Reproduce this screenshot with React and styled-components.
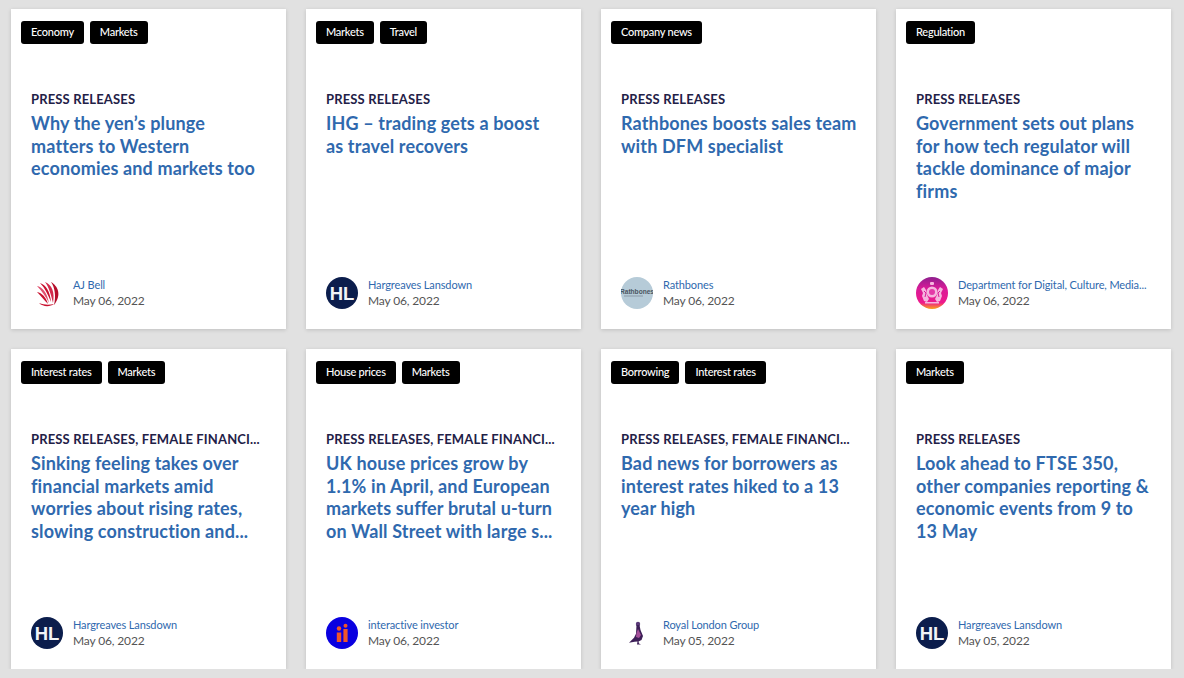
import styled, { createGlobalStyle } from "styled-components";

const GlobalStyle = createGlobalStyle`
  html, body {
    margin: 0;
    padding: 0;
    background: #e1e1e1;
  }
  body {
    font-family: "Lato", "Liberation Sans", sans-serif;
  }
`;

function AjBellLogo() {
  return (
    <svg width="32" height="32" viewBox="0 0 32 32">
      <path d="M20 5C27 9 31 18 23 28C25 19 24 11 20 5z" fill="#b50d2a" />
      <path d="M14 5C21 8 24 15 22 26C20 18 18 10 14 5z" fill="#d42a4c" />
      <path d="M9 6C15 8 19 14 20 25C17 18 14 11 9 6z" fill="#c8102e" />
      <path d="M6 9C11 10 16 15 18 26C15 20 11 14 6 9z" fill="#e0506e" />
      <path d="M6 15C11 16 15 20 17 27C13 23 10 19 6 15z" fill="#c8102e" />
      <path d="M8 26C12 30 19 30 23 27C18 28 13 28 8 26z" fill="#c8102e" />
    </svg>
  );
}

function HlLogo() {
  return (
    <svg width="32" height="32" viewBox="0 0 32 32">
      <circle cx="16" cy="16" r="16" fill="#0b1d4c" />
      <text x="16" y="22.5" textAnchor="middle" fontSize="18.5" fontWeight="700" fontFamily="Liberation Sans" fill="#f2f4f8">HL</text>
    </svg>
  );
}

function RathbonesLogo() {
  return (
    <svg width="32" height="32" viewBox="0 0 32 32">
      <circle cx="16" cy="16" r="16" fill="#b6cbd8" />
      <text x="16" y="16.5" textAnchor="middle" fontSize="6.6" fontWeight="700" fontFamily="Liberation Sans" fill="#4a5560">Rathbones</text>
      <rect x="3" y="18.5" width="19" height="1" fill="#8a9aa6" />
    </svg>
  );
}

function CrestLogo() {
  return (
    <svg width="32" height="32" viewBox="0 0 32 32">
      <defs>
        <linearGradient id="crest" x1="0" y1="0" x2="0" y2="1">
          <stop offset="0" stopColor="#8e1f8e" />
          <stop offset="0.35" stopColor="#d81b98" />
          <stop offset="0.8" stopColor="#ee1a8c" />
          <stop offset="1" stopColor="#f9a51a" />
        </linearGradient>
      </defs>
      <circle cx="16" cy="16" r="16" fill="url(#crest)" />
      <g fill="#f5b6de">
        <rect x="14" y="5" width="4" height="3" rx="1" />
        <circle cx="16" cy="15" r="5.5" />
        <path d="M5 12l3-2 2 3 1 5 2 4-2 3-3-1-2-5 1-3zM27 12l-3-2-2 3-1 5-2 4 2 3 3-1 2-5-1-3z" />
        <rect x="9" y="25" width="14" height="1.5" />
      </g>
      <circle cx="16" cy="15" r="3" fill="#e43aa8" />
      <path d="M8 14l2 2-1 4M24 14l-2 2 1 4" fill="none" stroke="#d81b98" strokeWidth="1" />
    </svg>
  );
}

function InteractiveLogo() {
  return (
    <svg width="32" height="32" viewBox="0 0 32 32">
      <circle cx="16" cy="16" r="16" fill="#0a00e0" />
      <g fill="#f0552a">
        <circle cx="13" cy="11.5" r="2.2" />
        <rect x="10.8" y="15.5" width="4.4" height="9.5" />
        <circle cx="19.5" cy="8.7" r="2" />
        <rect x="17.4" y="12" width="4.2" height="13" />
      </g>
    </svg>
  );
}

function RoyalLondonLogo() {
  return (
    <svg width="32" height="32" viewBox="0 0 32 32">
      <circle cx="17" cy="7" r="2.2" fill="#5a3a78" />
      <path d="M15.5 8h3l1 5 2.5 6-1.5 4-3 1.5.5 2 2 1h-4l.5-3-3 .2-5.500 1 5-5 2-4z" fill="#3d1f57" />
      <path d="M17 12l3 6-2 3-3-1 .5-4z" fill="#a5509a" />
    </svg>
  );
}

const logos = {
  aj: AjBellLogo,
  hl: HlLogo,
  rathbones: RathbonesLogo,
  crest: CrestLogo,
  ii: InteractiveLogo,
  royal: RoyalLondonLogo,
};

// line breaks in the titles are kept by hand, the font here isn't the one in the design
const articles = [
  { tags: ["Economy", "Markets"], category: "PRESS RELEASES", title: "Why the yen’s plunge\nmatters to Western\neconomies and markets too", logo: "aj", source: "AJ Bell", date: "May 06, 2022" },
  { tags: ["Markets", "Travel"], category: "PRESS RELEASES", title: "IHG – trading gets a boost\nas travel recovers", logo: "hl", source: "Hargreaves Lansdown", date: "May 06, 2022" },
  { tags: ["Company news"], category: "PRESS RELEASES", title: "Rathbones boosts sales team\nwith DFM specialist", logo: "rathbones", source: "Rathbones", date: "May 06, 2022" },
  { tags: ["Regulation"], category: "PRESS RELEASES", title: "Government sets out plans\nfor how tech regulator will\ntackle dominance of major\nfirms", logo: "crest", source: "Department for Digital, Culture, Media...", date: "May 06, 2022" },
  { tags: ["Interest rates", "Markets"], category: "PRESS RELEASES, FEMALE FINANCI...", title: "Sinking feeling takes over\nfinancial markets amid\nworries about rising rates,\nslowing construction and...", logo: "hl", source: "Hargreaves Lansdown", date: "May 06, 2022" },
  { tags: ["House prices", "Markets"], category: "PRESS RELEASES, FEMALE FINANCI...", title: "UK house prices grow by\n1.1% in April, and European\nmarkets suffer brutal u-turn\non Wall Street with large s...", logo: "ii", source: "interactive investor", date: "May 06, 2022" },
  { tags: ["Borrowing", "Interest rates"], category: "PRESS RELEASES, FEMALE FINANCI...", title: "Bad news for borrowers as\ninterest rates hiked to a 13\nyear high", logo: "royal", source: "Royal London Group", date: "May 05, 2022" },
  { tags: ["Markets"], category: "PRESS RELEASES", title: "Look ahead to FTSE 350,\nother companies reporting &\neconomic events from 9 to\n13 May", logo: "hl", source: "Hargreaves Lansdown", date: "May 05, 2022" },
];

export default function App() {
  return (
    <>
      <GlobalStyle />
      <Grid>
        {articles.map((a) => {
          const Logo = logos[a.logo];
          return (
            <Card key={a.title}>
              <Tags>
                {a.tags.map((t) => (
                  <Tag key={t}>{t}</Tag>
                ))}
              </Tags>
              <Body>
                <Category>{a.category}</Category>
                <Title>{a.title}</Title>
              </Body>
              <Footer>
                <Logo />
                <Meta>
                  <Source>{a.source}</Source>
                  <PublishDate>{a.date}</PublishDate>
                </Meta>
              </Footer>
            </Card>
          );
        })}
      </Grid>
    </>
  );
}

const Grid = styled.div`
  display: grid;
  grid-template-columns: repeat(4, 275px);
  grid-auto-rows: 320px;
  gap: 20px;
  padding: 9px 0 0 11px;
  height: 669px;
  box-sizing: border-box;
  overflow: hidden;
`;

const Card = styled.div`
  background: #fff;
  box-shadow: 0 1px 4px rgba(0, 0, 0, 0.15);
  display: flex;
  flex-direction: column;
  padding: 12px 10px 0;
  box-sizing: border-box;
`;

const Tags = styled.div`
  display: flex;
  gap: 6px;
  height: 23px;
`;

const Tag = styled.span`
  background: #000;
  color: #fff;
  border-radius: 3px;
  padding: 0 10px;
  font-size: 11px;
  font-weight: 500;
  letter-spacing: -0.25px;
  line-height: 22px;
`;

const Body = styled.div`
  padding: 47px 10px 0;
  flex: 1;
`;

const Category = styled.div`
  color: #1f2147;
  font-size: 13px;
  font-weight: 700;
  letter-spacing: 0.15px;
  line-height: 17px;
  white-space: nowrap;
`;

const Title = styled.div`
  color: #2f69ae;
  font-size: 18px;
  font-weight: 700;
  letter-spacing: 0.15px;
  line-height: 22.5px;
  margin-top: 4px;
  white-space: pre;
`;

const Footer = styled.div`
  display: flex;
  align-items: center;
  gap: 10px;
  padding: 0 10px 20px;
`;

const Meta = styled.div`
  display: flex;
  flex-direction: column;
  gap: 3px;
`;

const Source = styled.span`
  color: #2f69ae;
  font-size: 11px;
  letter-spacing: -0.12px;
  line-height: 13px;
  white-space: nowrap;
`;

const PublishDate = styled.span`
  color: #555;
  font-size: 12px;
  letter-spacing: -0.15px;
  line-height: 14px;
`;
